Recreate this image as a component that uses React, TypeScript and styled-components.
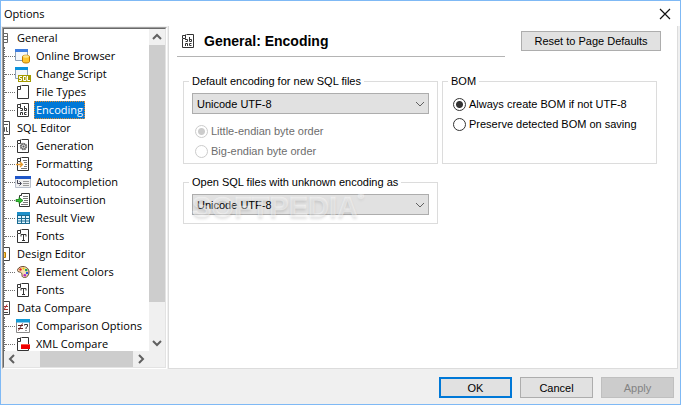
import React from "react";
import styled, { createGlobalStyle, css } from "styled-components";

const Global = createGlobalStyle`
  * { box-sizing: border-box; }
  body { margin: 0; background: #f0f0f0; }
  button, select, input { font: inherit; color: inherit; margin: 0; }
`;

const uiFont = `"Liberation Sans", Arial, sans-serif`;
const treeFont = `"Open Sans", "Noto Sans", sans-serif`;

const Dialog = styled.div`
  display: grid;
  grid-template-rows: 25px 1fr auto;
  min-height: 100vh;
  border: 1px solid #7fb9f5;
  background: #f0f0f0;
  color: #000;
  font: 11px/14px ${uiFont};
`;

const TitleBar = styled.header`
  display: flex;
  align-items: center;
  justify-content: space-between;
  padding: 0 8px 0 3px;
  background: #fff;
  font: 11px/18px ${treeFont};
`;

const CloseButton = styled.button`
  display: flex;
  padding: 0;
  border: 0;
  background: none;
`;

const Main = styled.main`
  display: grid;
  grid-template-columns: 165px 1fr;
  gap: 1px;
  padding: 0 2px 0 1px;
`;

const TreeOuter = styled.nav`
  display: grid;
  margin-top: 1px;
  border: 1px solid;
  border-color: #a0a0a0 #fff #fff #a0a0a0;
`;

const TreeInner = styled.div`
  display: grid;
  grid-template: minmax(0, 1fr) 16px / minmax(0, 1fr) 16px;
  border: 1px solid;
  border-color: #696969 #e3e3e3 #e3e3e3 #696969;
`;

const TreeView = styled.div`
  height: 322px;
  overflow: hidden;
  background: #fff;
  font: 11px/18px ${treeFont};
`;

const List = styled.ul`
  margin: 0;
  padding: 0;
  list-style: none;
`;

const SubList = styled(List)`
  border-left: 1px dotted #707070;
`;

const GroupRow = styled.div`
  display: flex;
  align-items: center;
  height: 18px;
  margin-left: -8px;
  white-space: nowrap;
`;

const ItemRow = styled.a`
  display: flex;
  align-items: center;
  height: 18px;
  color: #000;
  text-decoration: none;
  white-space: nowrap;

  &::before {
    content: "";
    flex: 0 0 10px;
    border-top: 1px dotted #707070;
  }
`;

const ItemLabel = styled.span<{ $selected?: boolean }>`
  height: 18px;
  margin-left: 3px;
  padding: 0 2px;
  line-height: 18px;
  ${(p) =>
    p.$selected &&
    css`
      background: #0078d7;
      color: #fff;
      outline: 1px dotted #e08a2c;
      outline-offset: -1px;
    `}
`;

const ScrollBar = styled.div<{ $vertical?: boolean }>`
  display: flex;
  flex-direction: ${(p) => (p.$vertical ? "column" : "row")};
  background: #f0f0f0;
`;

const ScrollButton = styled.button`
  display: grid;
  place-items: center;
  flex: 0 0 16px;
  padding: 0;
  border: 0;
  background: none;
`;

const Track = styled.div<{ $size: number }>`
  flex: ${(p) => p.$size} 1 0;
`;

const Thumb = styled(Track)`
  background: #cdcdcd;
`;

const Page = styled.section`
  border: 1px solid #dcdcdc;
  border-top: 0;
  background: #fff;
`;

const PageHeader = styled.div`
  display: flex;
  align-items: flex-start;
  gap: 16px;
  padding: 0 16px 0 8px;
`;

const Heading = styled.div`
  display: flex;
  flex: 1;
  align-items: center;
  gap: 8px;
  height: 31px;
  padding-left: 3px;
  border-bottom: 1px solid #b4b4b4;
`;

const Title = styled.h1`
  margin: 0;
  font: bold 14px/18px ${uiFont};
`;

const Button = styled.button<{ $primary?: boolean }>`
  width: 73px;
  height: 21px;
  padding: 0;
  border: ${(p) => (p.$primary ? "2px solid #0078d7" : "1px solid #adadad")};
  background: #e1e1e1;
  white-space: nowrap;

  &:disabled {
    border-color: #bfbfbf;
    background: #ccc;
    color: #838383;
  }
`;

const ResetButton = styled(Button)`
  width: 140px;
  height: 20px;
  margin-top: 5px;
`;

const Groups = styled.div`
  display: grid;
  grid-template-columns: 255fr 215fr;
  gap: 11px 4px;
  padding: 17px 20px 0 14px;
`;

const Group = styled.fieldset`
  position: relative;
  min-width: 0;
  margin: 0;
  padding: 5px 8px 2px;
  border: 1px solid #dcdcdc;
`;

const ComboGroup = styled(Group)`
  padding-bottom: 8px;
`;

const Legend = styled.legend`
  margin-left: -3px;
  padding: 0 3px;
`;

const Combo = styled.div`
  display: grid;
  align-items: center;
  > * {
    grid-area: 1 / 1;
  }
  > svg {
    justify-self: end;
    margin-right: 4px;
    pointer-events: none;
  }
`;

const Select = styled.select`
  appearance: none;
  width: 100%;
  height: 21px;
  padding: 0 20px 0 4px;
  border: 1px solid #adadad;
  border-radius: 0;
  background: #e1e1e1;
`;

const Radios = styled.div<{ $inset: number; $top: number }>`
  padding: ${(p) => p.$top}px 0 0 ${(p) => p.$inset}px;
`;

const RadioLabel = styled.label<{ $disabled?: boolean }>`
  display: flex;
  align-items: center;
  gap: 3px;
  height: 20px;
  color: ${(p) => (p.$disabled ? "#6d6d6d" : "#000")};
  white-space: nowrap;
`;

const Radio = styled.input`
  appearance: none;
  flex: none;
  width: 13px;
  height: 13px;
  border: 1px solid #333;
  border-radius: 50%;
  background: #fff;

  &:checked {
    background: radial-gradient(circle, #333 3px, #fff 4px);
  }
  &:disabled {
    border-color: #ccc;
  }
  &:disabled:checked {
    background: radial-gradient(circle, #ccc 3px, #fff 4px);
  }
`;

const Watermark = styled.div`
  position: absolute;
  top: 2px;
  left: 8px;
  display: flex;
  align-items: flex-start;
  color: rgba(255, 255, 255, 0.4);
  font: bold 29px/32px ${uiFont};
  -webkit-text-stroke: 1px rgba(255, 255, 255, 0.25);
  text-shadow: 0 2px 3px rgba(0, 0, 0, 0.12);
  pointer-events: none;

  sup {
    font-size: 8px;
    line-height: 12px;
  }
`;

const Footer = styled.footer`
  display: flex;
  justify-content: flex-end;
  gap: 8px;
  padding: 8px 6px 6px;
`;

const Svg = styled.svg`
  flex: none;
  display: block;
`;

type Kind =
  | "general" | "browser" | "script" | "file" | "encoding" | "sql" | "gear" | "format"
  | "complete" | "insert" | "grid" | "fonts" | "design" | "palette" | "data" | "compare" | "xml";

const Doc = () => (
  <path d="M6.5 1.5H13.5V14.5H2.5V5.5H5.5V1.5M2.5 5V2.5H5" fill="#fff" stroke="#333" />
);

const WindowFrame = ({ blue }: { blue: string }) => (
  <>
    <path d="M.5 1.5H12.5V12.5H.5Z" fill="#f4f7fb" stroke="#8aa0b8" />
    <path d="M0 1H13V4H0Z" fill={blue} />
  </>
);

const drawings: Record<Kind, React.ReactNode> = {
  general: <path d="M2.5 3.5H11.5V12.5H2.5ZM4 6.5H11M4 9.5H11" fill="#fff" stroke="#666" />,
  browser: (
    <>
      <WindowFrame blue="#3f7fe0" />
      <path d="M7.5 8.5C7.5 6.8 14.5 6.8 14.5 8.5V13.5C14.5 15.5 7.5 15.5 7.5 13.5Z" fill="#ffc62e" stroke="#c07a00" />
      <ellipse cx="11" cy="8.5" rx="3" ry="1.2" fill="#ffe58a" />
    </>
  ),
  script: (
    <>
      <WindowFrame blue="#0c93dd" />
      <path d="M3 9H16V16H3Z" fill="#a39a00" />
      <path d="M7 10.5H4.5V12.5H6.5V14.5H4M8.500 10.5H11V14.5H8.500ZM12.5 10V14.5H15" fill="none" stroke="#fff" />
    </>
  ),
  file: <Doc />,
  encoding: (
    <>
      <Doc />
      <path d="M5 6.5H7.5V8.5H5.5M9.5 4V8.5H11.5V6.5H9.5M5.5 13V10.5H7.5V13M11.5 10.5H9.5V12.5H11.5" fill="none" stroke="#333" />
    </>
  ),
  sql: (
    <>
      <path d="M2.5 1.5H13.5V14.5H2.5Z" fill="#fff" stroke="#444" />
      <path d="M4 4.5H12M5.5 7V11.5H8.5V7.5H5.5M10.5 7V11.5H12" fill="none" stroke="#555" />
    </>
  ),
  gear: (
    <>
      <Doc />
      <circle cx="8.5" cy="8.5" r="3" fill="#ddd" stroke="#777" strokeWidth="1.5" strokeDasharray="1.6 .7" />
      <circle cx="8.5" cy="8.5" r="2.5" fill="#ddd" stroke="#666" />
      <circle cx="8.5" cy="8.5" r="1" fill="#555" />
    </>
  ),
  format: (
    <>
      <Doc />
      <path d="M8 4.5H12M9 6.5H12M10 8.5H12M9 10.5H12M6 12.5H12" stroke="#777" />
      <path d="M1 8.5H7M5 6L7.5 8.5L5 11" fill="none" stroke="#e59a2d" strokeWidth="1.3" />
    </>
  ),
  complete: (
    <>
      <path d="M.5 2.5H15.5V13.5H.5Z" fill="#f0f0f0" stroke="#b9c0cc" />
      <path d="M0 2H16V5H0Z" fill="#1e56c8" />
      <path d="M2.5 6V9.5H6M4.5 7.5L6.5 9.5L4.5 11.5" fill="none" stroke="#445" />
      <path d="M8 7.5H14M8 9.5H14M8 11.5H14" stroke="#999" />
    </>
  ),
  insert: (
    <>
      <path d="M6.5 1.5H14.5V14.5H4.5V3.5H6.5Z" fill="#fff" stroke="#333" />
      <path d="M8 4.5H13M8 6.5H13M9 8.5H13M8 10.5H13M6 12.5H13" stroke="#777" />
      <path d="M1 7.5H4V5.5L8 8.5L4 11.5V9.5H1Z" fill="#35c435" stroke="#178017" strokeWidth=".8" />
    </>
  ),
  grid: (
    <>
      <path d="M2 2H15V14H2Z" fill="#196a91" />
      <path d="M2 2H15V5H2Z" fill="#1d8fc9" />
      <path d="M3 6H6V8H3ZM7 6H10V8H7ZM11 6H14V8H11ZM3 9H6V10.5H3ZM7 9H10V10.5H7ZM11 9H14V10.5H11ZM3 11.5H6V13H3ZM7 11.5H10V13H7ZM11 11.5H14V13H11Z" fill="#dff4ff" />
    </>
  ),
  fonts: (
    <>
      <Doc />
      <path d="M6 8.5V6.5H11V8.5M8.5 6.5V12.5M7 12.5H10" fill="none" stroke="#333" />
    </>
  ),
  design: (
    <>
      <path d="M2.5 1.5H13.5V14.5H2.5Z" fill="#fff" stroke="#444" />
      <path d="M5 6.5H9.5V11.5H5" fill="#ffc94a" stroke="#b67a00" />
    </>
  ),
  palette: (
    <>
      <path d="M8 2.5C4.5 2.5 2.5 4.5 2.5 6.5C2.5 8.5 5.5 7.5 6.5 9C7.5 10.5 6 13.5 9.5 13.5C12.5 13.5 14 11 14 8C14 5 11.5 2.5 8 2.5Z" fill="#f8dfb0" stroke="#6b4b32" />
      <circle cx="5.5" cy="5.5" r="1.2" fill="#e02020" />
      <circle cx="8.5" cy="4.5" r="1.1" fill="#e8c800" />
      <circle cx="11.2" cy="6" r="1.3" fill="#22a94a" />
      <circle cx="12" cy="9" r="1.2" fill="#2458e0" />
      <circle cx="9.8" cy="11.3" r="1.3" fill="#b026c8" />
    </>
  ),
  data: (
    <>
      <path d="M2.5 1.5H13.5V14.5H2.5Z" fill="#fff" stroke="#444" />
      <path d="M6 6.5H12M6 9.5H12M11 4.5L7 11.5" stroke="#a33" />
      <path d="M7 12.5H12" stroke="#444" />
    </>
  ),
  compare: (
    <>
      <path d="M1.5 1.5H14.5V14.5H1.5Z" fill="#fff" stroke="#888" />
      <path d="M1 1H15V4.5H1Z" fill="#159bd7" />
      <path d="M3 7.5H8M3 10.5H8M7.5 5.5L3.5 12.5" stroke="#622" />
      <path d="M9.5 7.5V6.5H12.5V8.5L11 9.5V11M11 12V13" fill="none" stroke="#333" />
    </>
  ),
  xml: (
    <>
      <Doc />
      <path d="M6 8H15V13H6Z" fill="#f00000" />
      <path d="M6 8H15V9H6Z" fill="#ff5b4c" />
    </>
  ),
};

const Icon = ({ kind }: { kind: Kind }) => (
  <Svg width="16" height="16" viewBox="0 0 16 16" aria-hidden="true">
    {drawings[kind]}
  </Svg>
);

const chevrons = {
  up: "M1 7L5 3L9 7",
  down: "M1 3L5 7L9 3",
  left: "M7 1L3 5L7 9",
  right: "M3 1L7 5L3 9",
};

const Chevron = ({ to, weight = 2 }: { to: keyof typeof chevrons; weight?: number }) => (
  <Svg width="10" height="10" viewBox="0 0 10 10" aria-hidden="true">
    <path d={chevrons[to]} fill="none" stroke="#606060" strokeWidth={weight} />
  </Svg>
);

const tree: { label: string; icon: Kind; items: { label: string; icon: Kind }[] }[] = [
  {
    label: "General",
    icon: "general",
    items: [
      { label: "Online Browser", icon: "browser" },
      { label: "Change Script", icon: "script" },
      { label: "File Types", icon: "file" },
      { label: "Encoding", icon: "encoding" },
    ],
  },
  {
    label: "SQL Editor",
    icon: "sql",
    items: [
      { label: "Generation", icon: "gear" },
      { label: "Formatting", icon: "format" },
      { label: "Autocompletion", icon: "complete" },
      { label: "Autoinsertion", icon: "insert" },
      { label: "Result View", icon: "grid" },
      { label: "Fonts", icon: "fonts" },
    ],
  },
  {
    label: "Design Editor",
    icon: "design",
    items: [
      { label: "Element Colors", icon: "palette" },
      { label: "Fonts", icon: "fonts" },
    ],
  },
  {
    label: "Data Compare",
    icon: "data",
    items: [
      { label: "Comparison Options", icon: "compare" },
      { label: "XML Compare", icon: "xml" },
    ],
  },
];

const EncodingCombo = ({ label }: { label: string }) => (
  <Combo>
    <Select aria-label={label} defaultValue="utf8">
      <option value="utf8">Unicode UTF-8</option>
    </Select>
    <Chevron to="down" weight={1} />
  </Combo>
);

export default function App() {
  return (
    <>
      <Global />
      <Dialog role="dialog" aria-label="Options">
        <TitleBar>
          <span>Options</span>
          <CloseButton aria-label="Close">
            <Svg width="14" height="12" viewBox="0 0 14 12">
              <path d="M2 1L12 11M12 1L2 11" stroke="#111" strokeWidth="1.2" />
            </Svg>
          </CloseButton>
        </TitleBar>
        <Main>
          <TreeOuter aria-label="Option pages">
            <TreeInner>
              <TreeView>
                <List>
                  {tree.map((group) => (
                    <li key={group.label}>
                      <GroupRow>
                        <Icon kind={group.icon} />
                        <ItemLabel>{group.label}</ItemLabel>
                      </GroupRow>
                      <SubList>
                        {group.items.map((item) => (
                          <li key={item.label}>
                            <ItemRow href="#">
                              <Icon kind={item.icon} />
                              <ItemLabel $selected={item.label === "Encoding"}>{item.label}</ItemLabel>
                            </ItemRow>
                          </li>
                        ))}
                      </SubList>
                    </li>
                  ))}
                </List>
              </TreeView>
              <ScrollBar $vertical>
                <ScrollButton aria-label="Scroll up"><Chevron to="up" /></ScrollButton>
                <Thumb $size={257} />
                <Track $size={33} />
                <ScrollButton aria-label="Scroll down"><Chevron to="down" /></ScrollButton>
              </ScrollBar>
              <ScrollBar>
                <ScrollButton aria-label="Scroll left"><Chevron to="left" /></ScrollButton>
                <Track $size={20} />
                <Thumb $size={92} />
                <ScrollButton aria-label="Scroll right"><Chevron to="right" /></ScrollButton>
              </ScrollBar>
              <ScrollBar />
            </TreeInner>
          </TreeOuter>
          <Page>
            <PageHeader>
              <Heading>
                <Icon kind="encoding" />
                <Title>General: Encoding</Title>
              </Heading>
              <ResetButton>Reset to Page Defaults</ResetButton>
            </PageHeader>
            <Groups>
              <Group>
                <Legend>Default encoding for new SQL files</Legend>
                <EncodingCombo label="Default encoding for new SQL files" />
                <Radios $inset={3} $top={7}>
                  <RadioLabel $disabled>
                    <Radio type="radio" name="order" disabled defaultChecked />
                    Little-endian byte order
                  </RadioLabel>
                  <RadioLabel $disabled>
                    <Radio type="radio" name="order" disabled />
                    Big-endian byte order
                  </RadioLabel>
                </Radios>
              </Group>
              <Group>
                <Legend>BOM</Legend>
                <Radios $inset={2} $top={1}>
                  <RadioLabel>
                    <Radio type="radio" name="bom" defaultChecked />
                    Always create BOM if not UTF-8
                  </RadioLabel>
                  <RadioLabel>
                    <Radio type="radio" name="bom" />
                    Preserve detected BOM on saving
                  </RadioLabel>
                </Radios>
              </Group>
              <ComboGroup>
                <Legend>Open SQL files with unknown encoding as</Legend>
                <EncodingCombo label="Open SQL files with unknown encoding as" />
                <Watermark>
                  SOFTPEDIA<sup>®</sup>
                </Watermark>
              </ComboGroup>
            </Groups>
          </Page>
        </Main>
        <Footer>
          <Button $primary>OK</Button>
          <Button>Cancel</Button>
          <Button disabled>Apply</Button>
        </Footer>
      </Dialog>
    </>
  );
}
